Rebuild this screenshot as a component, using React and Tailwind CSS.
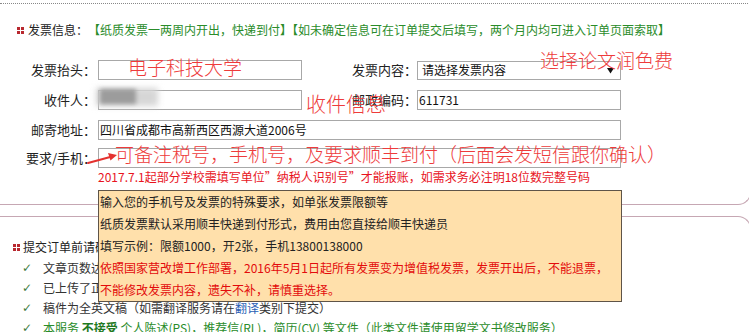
function Dots() {
  return (
    <span className="grid grid-cols-2 gap-[1px] w-[7px] h-[7px] shrink-0">
      <span className="bg-[#b8282f]" />
      <span className="bg-[#b8282f]" />
      <span className="bg-[#b8282f]" />
      <span className="bg-[#b8282f]" />
    </span>
  );
}

function Check() {
  return <span className="w-[21px] pl-[0px] text-[#3f7d3f] font-['DejaVu_Sans',sans-serif] text-[12px]">✓</span>;
}

export default function App() {
  return (
    <div className="relative w-[749px] h-[332px] overflow-hidden bg-white text-[12px] text-[#222] font-['Noto_Sans_CJK_SC','Liberation_Sans',sans-serif]">
      {/* Section 1 */}
      <div className="w-[751px] border-b border-r border-[#c6a7b3] rounded-br-[13px] pb-[19px]">
        <div className="h-[3px]" />
        <div className="border-t border-dotted border-[#888]" />
        <div className="mt-[16px] ml-[17px] flex items-center h-[20px] leading-[20px] whitespace-nowrap">
          <Dots />
          <span className="ml-[4px]">发票信息：</span>
          <span className="text-[#2a8c2a]">【纸质发票一两周内开出，快递到付】【如未确定信息可在订单提交后填写，两个月内均可进入订单页面索取】</span>
        </div>

        <div className="mt-[20px] flex flex-col text-[13px]">
          <div className="flex items-center h-[20px]">
            <span className="w-[96px] text-right">发票抬头：</span>
            <div className="ml-[2px] w-[204px] h-[20px] border border-[#a8a8a8]" />
            <span className="w-[115px] text-right">发票内容：</span>
            <div className="relative w-[204px] h-[19px] border border-[#a8a8a8] flex items-center pl-[4px] text-[12px] text-[#111]">
              请选择发票内容
              <svg className="absolute right-[6px] top-[6px]" width="7" height="6" viewBox="0 0 7 6">
                <polygon points="0,0 7,0 3.5,5.5" fill="#111" />
              </svg>
            </div>
          </div>

          <div className="flex items-center h-[20px] mt-[10px]">
            <span className="w-[96px] text-right">收件人：</span>
            <div className="ml-[2px] w-[204px] h-[20px] border border-[#a8a8a8]" />
            <span className="w-[115px] text-right">邮政编码：</span>
            <div className="w-[204px] h-[20px] border border-[#a8a8a8] flex items-center pl-[1px] text-[12px] text-[#111]">611731</div>
          </div>

          <div className="flex items-center h-[20px] mt-[10px]">
            <span className="w-[96px] text-right">邮寄地址：</span>
            <div className="ml-[2px] w-[523px] h-[20px] border border-[#a8a8a8] flex items-center pl-[1px] text-[12px] text-[#111]">四川省成都市高新西区西源大道2006号</div>
          </div>

          <div className="flex items-center h-[20px] mt-[8px]">
            <span className="w-[96px] text-right">要求/手机：</span>
            <div className="ml-[2px] w-[523px] h-[20px] border border-[#a8a8a8]" />
          </div>
        </div>

        <div className="mt-[1px] ml-[98px] leading-[16px] text-[#e8141e] whitespace-nowrap">
          2017.7.1起部分学校需填写单位”纳税人识别号”才能报账，如需求务必注明18位数完整号码
        </div>
      </div>

      {/* Section 2 */}
      <div className="mt-[11px] w-[751px] h-[200px] border-t border-r border-[#c6a7b3] rounded-tr-[13px] pt-[19px] whitespace-nowrap">
        <div className="ml-[13px] flex items-center h-[22px] leading-[22px]">
          <Dots />
          <span className="ml-[3px]">提交订单前请确认：</span>
        </div>
        <div className="ml-[22px] flex flex-col leading-[20px] text-[#333]">
          <div className="flex"><Check /><span>文章页数达到最低要求</span></div>
          <div className="flex"><Check /><span>已上传了正确的稿件</span></div>
          <div className="flex"><Check /><span>稿件为全英文稿（如需翻译服务请在<span className="text-[#2b5fb5]">翻译</span>类别下提交）</span></div>
          <div className="flex text-[#2a8c2a]"><Check /><span>本服务 <b className="text-[#1f7a1f]">不接受</b> 个人陈述(PS)，推荐信(RL)，简历(CV) 等文件（此类文件请使用留学文书修改服务）</span></div>
        </div>
      </div>

      {/* blurred name */}
      <span className="absolute left-[96px] top-[88px] w-[62px] h-[18px] bg-[#d6d6d6] blur-[3px]" />
      <span className="absolute left-[100px] top-[89px] w-[36px] h-[15px] bg-[#9c9c9c] blur-[2px]" />

      {/* overlays */}
      <span className="absolute left-[128px] top-[57px] leading-[20px] text-[19px] font-light text-[#ee3b3b] whitespace-nowrap">电子科技大学</span>
      <span className="absolute left-[540px] top-[50px] leading-[20px] text-[19px] font-light text-[#ee3b3b] whitespace-nowrap">选择论文润色费</span>
      <span className="absolute left-[306px] top-[93px] leading-[22px] text-[20px] font-light text-[#ee3b3b] whitespace-nowrap">收件信息</span>
      <span className="absolute left-[115px] top-[144px] leading-[20px] text-[19px] font-light text-[#ee3b3b] whitespace-nowrap">可备注税号，手机号，及要求顺丰到付（后面会发短信跟你确认）</span>
      <svg className="absolute left-[86px] top-[150px]" width="32" height="16" viewBox="0 0 32 16">
        <path d="M2 13 L26 6.5" stroke="#e4322f" strokeWidth="2" fill="none" strokeLinecap="round" />
        <polygon points="31,5 22,3 24.5,10.5" fill="#e4322f" />
      </svg>

      {/* tooltip */}
      <div className="absolute left-[98px] top-[190px] w-[524px] h-[112px] border border-[#5e5448] bg-[#ffe0ab] pl-[1px] leading-[22px] text-[12px] text-[#222] whitespace-nowrap">
        <div>输入您的手机号及发票的特殊要求，如单张发票限额等</div>
        <div>纸质发票默认采用顺丰快递到付形式，费用由您直接给顺丰快递员</div>
        <div>填写示例：限额1000，开2张，手机13800138000</div>
        <div className="text-[#e30b0b]">依照国家营改增工作部署，2016年5月1日起所有发票变为增值税发票，发票开出后，不能退票，</div>
        <div className="text-[#e30b0b]">不能修改发票内容，遗失不补，请慎重选择。</div>
      </div>
    </div>
  );
}
